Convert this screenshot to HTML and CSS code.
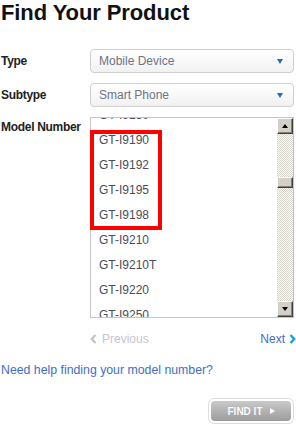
FILE: index.html
```html
<!DOCTYPE html>
<html>
<head>
<meta charset="utf-8">
<link rel="stylesheet" href="styles.css">
</head>
<body>
<div class="page">
  <h1 class="title">Find Your Product</h1>
  <div class="form">
    <div class="label">Type</div>
    <div class="select"><span>Mobile Device</span><i class="caret"></i></div>
    <div class="label">Subtype</div>
    <div class="select"><span>Smart Phone</span><i class="caret"></i></div>
    <div class="label label-top">Model Number</div>
    <div class="listbox">
      <div class="list">
        <ul class="items">
          <li>GT-I9180</li>
          <li>GT-I9190</li>
          <li>GT-I9192</li>
          <li>GT-I9195</li>
          <li>GT-I9198</li>
          <li>GT-I9210</li>
          <li>GT-I9210T</li>
          <li>GT-I9220</li>
          <li>GT-I9250</li>
        </ul>
      </div>
      <div class="scrollbar">
        <div class="sb-btn sb-up"></div>
        <div class="sb-track"><div class="sb-thumb"></div></div>
        <div class="sb-btn sb-down"></div>
      </div>
      <div class="highlight"></div>
    </div>
  </div>
  <div class="pager">
    <span class="prev"><svg width="7" height="10" viewBox="0 0 7 10"><polyline points="5.5,1 1.8,5 5.5,9" fill="none" stroke="#c4c4cc" stroke-width="2.4"/></svg><span>Previous</span></span>
    <span class="next"><span>Next</span><svg width="7" height="10" viewBox="0 0 7 10"><polyline points="1.5,1 5.2,5 1.5,9" fill="none" stroke="#1e9ed8" stroke-width="2.4"/></svg></span>
  </div>
  <a class="help" href="#">Need help finding your model number?</a>
  <div class="actions">
    <div class="btn-ring"><div class="btn">FIND IT<i class="play"></i></div></div>
  </div>
</div>
</body>
</html>
```
FILE: styles.css
```css
* { box-sizing: border-box; }
html, body { margin: 0; padding: 0; background: #fff; }
body { font-family: "Liberation Sans", Arial, sans-serif; }
.page { padding-left: 1px; width: 296px; }
.title { margin: 0; font-size: 22px; line-height: 26px; font-weight: bold; color: #111; letter-spacing: -0.1px; }
.form { margin-top: 23px; display: grid; grid-template-columns: 89px 204px; row-gap: 10px; align-items: center; }
.label { font-size: 12px; font-weight: bold; color: #222; letter-spacing: -0.3px; line-height: 16px; }
.label-top { align-self: start; padding-top: 2px; }
.select { height: 24px; border: 1px solid #cfcfcf; border-radius: 4px; background: linear-gradient(#ffffff, #f1f1f1); display: flex; align-items: center; justify-content: space-between; padding: 0 10px 0 8px; font-size: 12px; color: #6c7488; }
.caret { width: 0; height: 0; border-left: 3.5px solid transparent; border-right: 3.5px solid transparent; border-top: 5px solid #1c6fb8; }
.listbox { position: relative; height: 201px; border: 1px solid #c4c4c4; display: flex; background: #fff; }
.list { flex: 1; overflow: hidden; }
.items { list-style: none; margin: -15px 0 0 0; padding: 0; }
.items li { height: 25px; line-height: 25px; padding-left: 8px; font-size: 12px; color: #4c4c58; }
.scrollbar { width: 16px; display: flex; flex-direction: column; }
.sb-btn { height: 16px; background: #d4d0c8; border-top: 1px solid #fff; border-left: 1px solid #fff; border-right: 1px solid #404040; border-bottom: 1px solid #404040; box-shadow: inset -1px -1px 0 #808080; display: flex; align-items: center; justify-content: center; }
.sb-up::after { content: ""; border-left: 3.5px solid transparent; border-right: 3.5px solid transparent; border-bottom: 4px solid #000; margin-top: -1px; }
.sb-down::after { content: ""; border-left: 3.5px solid transparent; border-right: 3.5px solid transparent; border-top: 4px solid #000; }
.sb-track { flex: 1; background: repeating-conic-gradient(#d4d0c8 0 25%, #ffffff 0 50%) 0 0 / 2px 2px; }
.sb-thumb { margin-top: 43px; height: 11px; background: #d4d0c8; border-top: 1px solid #fff; border-left: 1px solid #fff; border-right: 1px solid #404040; border-bottom: 1px solid #404040; box-shadow: inset -1px -1px 0 #808080; }
.highlight { position: absolute; left: -1px; top: 12px; width: 72px; height: 100px; border: 4px solid #ff0000; }
.pager { margin: 13px 0 0 89px; width: 206px; height: 16px; display: flex; justify-content: space-between; align-items: center; font-size: 12px; line-height: 16px; }
.prev { color: #c4c4cc; display: flex; align-items: center; gap: 5px; }
.next { color: #3f6ec4; display: flex; align-items: center; gap: 4px; }
.help { display: block; margin-top: 15px; font-size: 12.3px; line-height: 16px; color: #3f6ec6; text-decoration: none; }
.actions { margin-top: 20px; display: flex; justify-content: flex-end; padding-right: 2px; }
.btn-ring { border: 1px solid #dcdcdc; border-radius: 6px; padding: 2px; background: #fff; }
.btn { width: 80px; height: 20px; border-radius: 4px; background: linear-gradient(#c9c9c9, #9c9c9c); color: #fff; font-size: 10px; font-weight: bold; display: flex; align-items: center; justify-content: center; gap: 7px; text-shadow: 0 0 1px rgba(0,0,0,0.15); }
.play { width: 0; height: 0; border-top: 3.5px solid transparent; border-bottom: 3.5px solid transparent; border-left: 5px solid #fff; }
```
